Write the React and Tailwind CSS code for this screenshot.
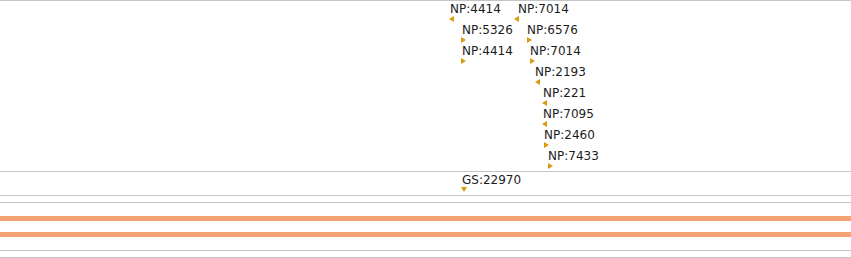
const features = [
  { label: "NP:4414", x: 450, tx: 449, row: 0, dir: "left" },
  { label: "NP:7014", x: 518, tx: 514, row: 0, dir: "left" },
  { label: "NP:5326", x: 462, tx: 461, row: 1, dir: "right" },
  { label: "NP:6576", x: 527, tx: 527, row: 1, dir: "right" },
  { label: "NP:4414", x: 462, tx: 461, row: 2, dir: "right" },
  { label: "NP:7014", x: 530, tx: 530, row: 2, dir: "right" },
  { label: "NP:2193", x: 535, tx: 535, row: 3, dir: "left" },
  { label: "NP:221", x: 543, tx: 542, row: 4, dir: "left" },
  { label: "NP:7095", x: 543, tx: 542, row: 5, dir: "left" },
  { label: "NP:2460", x: 544, tx: 544, row: 6, dir: "right" },
  { label: "NP:7433", x: 548, tx: 548, row: 7, dir: "right" },
];

function Arrow({ dir }) {
  const pts = {
    left: "0,3 5,0 5,6",
    right: "0,0 5,3 0,6",
    down: "0,0 6,0 3,5",
  }[dir];
  return (
    <svg width="6" height="6" viewBox="0 0 6 6" className="block">
      <polygon points={pts} fill="#d99a0b" />
    </svg>
  );
}

// baseline is the page y of the text baseline, offset is the track's top padding edge
function Feature({ label, x, tx, baseline, dir, offset }) {
  return (
    <>
      <span
        className="absolute leading-none text-[12px] text-[#1c1c1c] whitespace-nowrap"
        style={{ left: x, top: baseline - 10 - offset }}
      >
        {label}
      </span>
      <span className="absolute" style={{ left: tx, top: baseline + 3 - offset }}>
        <Arrow dir={dir} />
      </span>
    </>
  );
}

export default function App() {
  return (
    <div className="w-[851px] h-[258px] bg-white flex flex-col overflow-hidden font-['DejaVu_Sans',sans-serif]">
      {/* gene track */}
      <div className="relative h-[171px] shrink-0 border-t border-[#c4c4c4]">
        {features.map((f, i) => (
          <Feature key={i} {...f} baseline={13 + f.row * 21} offset={1} />
        ))}
      </div>

      {/* GS track */}
      <div className="relative h-[24px] shrink-0 border-t border-[#c4c4c4]">
        <Feature label="GS:22970" x={462} tx={461} baseline={184} dir="down" offset={172} />
      </div>

      <div className="h-[7px] shrink-0 border-t border-[#c4c4c4]" />
      <div className="h-[14px] shrink-0 border-t border-[#c4c4c4]" />
      <div className="h-[5px] shrink-0 bg-[#f4a271]" />
      <div className="h-[11px] shrink-0" />
      <div className="h-[5px] shrink-0 bg-[#f4a271]" />
      <div className="h-[13px] shrink-0" />
      <div className="h-[7px] shrink-0 border-t border-[#c4c4c4]" />
      <div className="h-px shrink-0 bg-[#c4c4c4]" />
    </div>
  );
}
